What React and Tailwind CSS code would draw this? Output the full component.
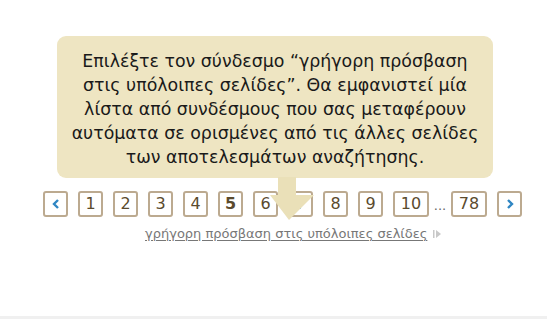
import React from "react";

const box =
  "h-[26px] border-2 border-[#bcaa90] rounded-[3px] flex items-center justify-center text-[16px] text-[#5b4b2e] bg-white shrink-0";

function Page({ n, bold }) {
  const wide = String(n).length > 1;
  return (
    <div className={`${box} ${wide ? "w-[36px]" : "w-[25px]"} ${bold ? "font-bold text-[#4a3a1c]" : ""}`}>
      {n}
    </div>
  );
}

export default function App() {
  return (
    <div className="relative w-[547px] h-[319px] bg-white overflow-hidden font-['DejaVu_Sans',sans-serif] flex flex-col">
      <div className="flex-1 flex flex-col">
        <div className="pt-[191px] pl-[43px] flex items-center gap-[10px]">
          <div className={`${box} w-[25px]`}>
            <svg width="10" height="12" viewBox="0 0 10 12">
              <path d="M7 2 L3 6 L7 10" fill="none" stroke="#2f86c3" strokeWidth="2.4" />
            </svg>
          </div>
          <Page n={1} />
          <Page n={2} />
          <Page n={3} />
          <Page n={4} />
          <Page n={5} bold />
          <Page n={6} />
          <Page n={7} />
          <Page n={8} />
          <Page n={9} />
          <div className="flex items-center">
            <Page n={10} />
            <span className="w-[22px] text-center text-[13px] text-[#666] self-end pb-[2px]">...</span>
            <Page n={78} />
          </div>
          <div className={`${box} w-[25px]`}>
            <svg width="10" height="12" viewBox="0 0 10 12">
              <path d="M3 2 L7 6 L3 10" fill="none" stroke="#2f86c3" strokeWidth="2.4" />
            </svg>
          </div>
        </div>
        <div className="pl-[145px] mt-[8px] flex">
          <a className="text-[13px] leading-[17px] text-[#777] underline underline-offset-[2px] decoration-[#777] flex items-center gap-[4px] pr-[5px]">
            γρήγορη πρόσβαση στις υπόλοιπες σελίδες
            <svg width="9" height="10" viewBox="0 0 9 10" className="ml-[2px]">
              <rect x="0" y="1" width="1.5" height="8" fill="#c8c8c8" />
              <path d="M3 1 L8 5 L3 9 Z" fill="#c8c8c8" />
            </svg>
          </a>
        </div>
      </div>
      <div className="h-[3px] bg-[#f0f0f0]" />

      {/* tooltip bubble */}
      <div className="absolute left-[57px] top-[36px] w-[436px] h-[142px] rounded-[9px] bg-[#eee5c2] flex items-center justify-center pt-[4px]">
        <p className="text-center text-[17.4px] leading-[24px] text-[#1a1a1a] whitespace-nowrap">
          Επιλέξτε τον σύνδεσμο “γρήγορη πρόσβαση
          <br />
          στις υπόλοιπες σελίδες”. Θα εμφανιστεί μία
          <br />
          λίστα από συνδέσμους που σας μεταφέρουν
          <br />
          αυτόματα σε ορισμένες από τις άλλες σελίδες
          <br />
          των αποτελεσμάτων αναζήτησης.
        </p>
      </div>
      <svg className="absolute left-[269px] top-[177px]" width="46" height="44" viewBox="0 0 46 44">
        <path d="M9 0 H27 V18 H45 L20 43 L1 18 H9 Z" fill="#eae0b8" />
      </svg>
    </div>
  );
}
